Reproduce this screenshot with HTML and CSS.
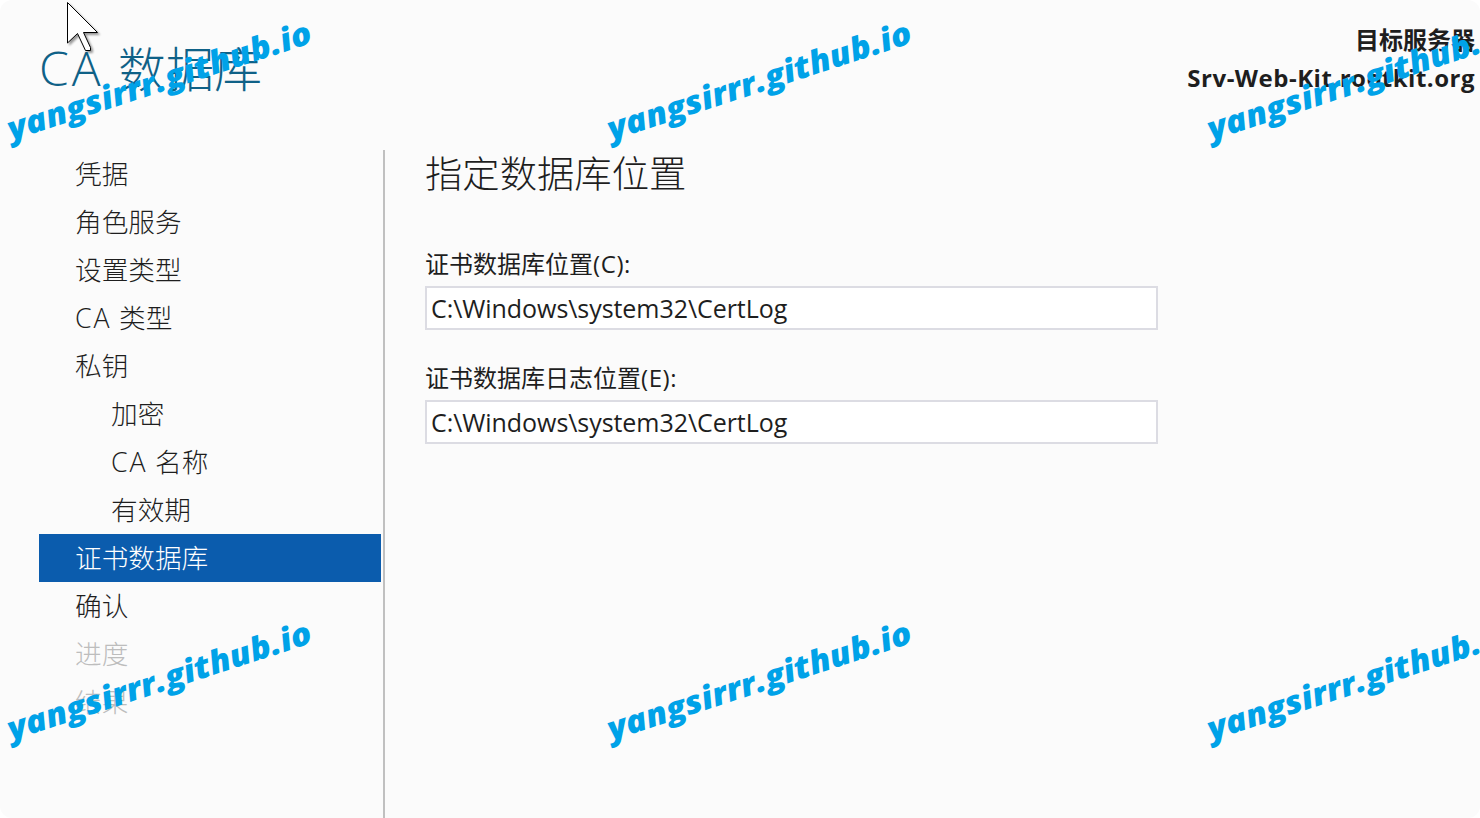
FILE: index.html
```html
<!DOCTYPE html>
<html lang="zh-CN">
<head>
<meta charset="utf-8">
<title>CA 数据库</title>
<link rel="stylesheet" href="styles.css">
</head>
<body>
<main class="window">
  <header class="header">
    <h1 class="title"><span class="title-latin">CA</span>数据库</h1>
    <div class="target">
      <div>目标服务器</div>
      <div class="target-name">Srv-Web-Kit.rootkit.org</div>
    </div>
  </header>
  <div class="body">
    <nav class="nav">
      <a class="item">凭据</a>
      <a class="item">角色服务</a>
      <a class="item">设置类型</a>
      <a class="item"><span class="latin">CA</span>类型</a>
      <a class="item">私钥</a>
      <a class="item sub">加密</a>
      <a class="item sub"><span class="latin">CA</span>名称</a>
      <a class="item sub">有效期</a>
      <a class="item active">证书数据库</a>
      <a class="item">确认</a>
      <a class="item disabled">进度</a>
      <a class="item disabled">结果</a>
    </nav>
    <section class="content">
      <h2 class="heading">指定数据库位置</h2>
      <div class="label">证书数据库位置<span class="key">(C):</span></div>
      <div class="field">C:\Windows\system32\CertLog</div>
      <div class="label second">证书数据库日志位置<span class="key">(E):</span></div>
      <div class="field">C:\Windows\system32\CertLog</div>
    </section>
  </div>
  <svg class="overlay" width="1480" height="818" viewBox="0 0 1480 818">
    <defs>
      <text id="mark" class="mark" transform="translate(11.500 140.500) rotate(-18)" textLength="318" lengthAdjust="spacingAndGlyphs">yangsirrr.github.io</text>
    </defs>
    <use href="#mark"/>
    <use href="#mark" x="600"/>
    <use href="#mark" x="1200"/>
    <use href="#mark" y="600"/>
    <use href="#mark" x="600" y="600"/>
    <use href="#mark" x="1200" y="600"/>
    <path class="cursor" d="M67.500 2.500V43L77.500 33.500L85.500 50.500H90.500V47.500L83.500 32.500H97.500Z"/>
  </svg>
</main>
</body>
</html>
```

FILE: styles.css
```css
* { box-sizing: border-box; }
body { margin: 0; background: #fff; }
.window {
  position: relative;
  width: 1480px;
  height: 818px;
  overflow: hidden;
  display: flex;
  flex-direction: column;
  background: #fbfbfb;
  border-radius: 12px;
  color: #1e1e1e;
  font-family: "Open Sans", "Noto Sans CJK SC", sans-serif;
}
.header {
  display: flex;
  justify-content: space-between;
  height: 150px;
  padding: 21px 5px 0 39px;
}
.title {
  display: flex;
  margin: 16px 0 0;
  font-size: 48px;
  line-height: 64px;
  font-weight: 300;
  color: #0f6187;
}
.title-latin { width: 79px; margin-top: -1px; letter-spacing: 3px; }
.target {
  text-align: right;
  font-size: 24px;
  line-height: 38px;
  font-weight: 700;
}
.target-name { white-space: nowrap; letter-spacing: .5px; }
.body { display: flex; flex: 1; }
.nav {
  width: 385px;
  padding-left: 39px;
  padding-right: 2px;
  border-right: 2px solid #c0c0c0;
}
.item {
  display: flex;
  height: 48px;
  padding-left: 36px;
  font-size: 26.670px;
  line-height: 48px;
  font-weight: 300;
}
.latin { width: 44px; letter-spacing: 2px; }
.sub { padding-left: 72px; }
.active { background: #0b5cad; color: #fff; }
.disabled { color: #bdbdbd; }
.content { padding-left: 40px; }
.heading {
  margin: 0;
  font-size: 37.330px;
  line-height: 48px;
  font-weight: 300;
}
.label {
  margin-top: 50px;
  font-size: 24px;
  line-height: 32px;
}
.key { letter-spacing: .6px; }
.second { margin-top: 32px; }
.field {
  width: 733px;
  height: 44px;
  margin-top: 6px;
  padding-left: 4px;
  border: 2px solid #dcdce3;
  background: #fff;
  font-size: 25px;
  line-height: 40px;
  letter-spacing: -.06px;
}
.overlay { position: absolute; left: 0; top: 0; }
.mark {
  font-family: "Open Sans", sans-serif;
  font-size: 32px;
  font-weight: 800;
  font-style: italic;
  fill: #00a2e8;
}
.cursor { fill: #fff; stroke: #000; stroke-width: 1; filter: drop-shadow(2px 2px 1px rgba(0, 0, 0, .4)); }
```
